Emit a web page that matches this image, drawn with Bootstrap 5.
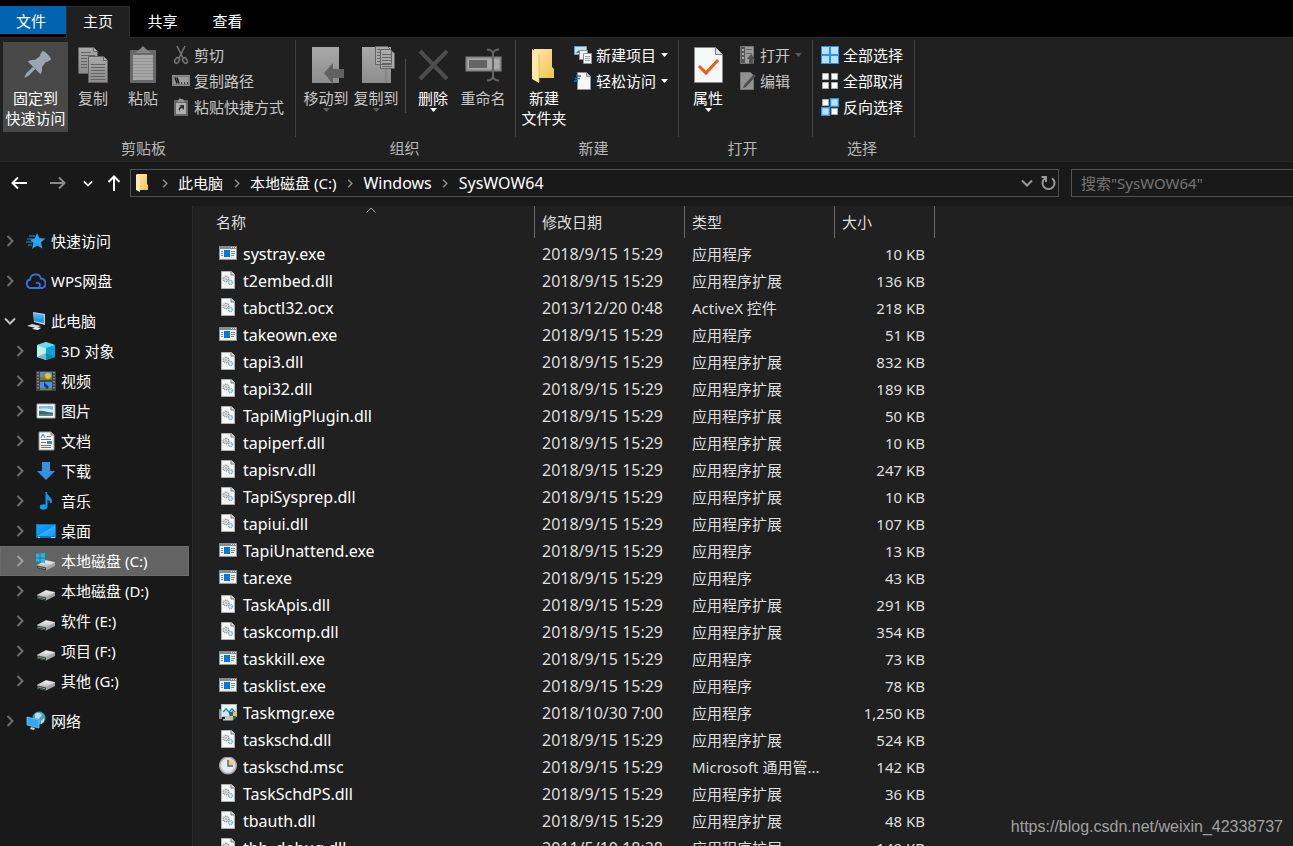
<!DOCTYPE html>
<html lang="zh-CN" data-bs-theme="dark">
<head>
<meta charset="utf-8">
<meta name="viewport" content="width=device-width, initial-scale=1">
<title>SysWOW64</title>
<link href="https://cdn.jsdelivr.net/npm/bootstrap@5.3.0/dist/css/bootstrap.min.css" rel="stylesheet">
<style>
body{font:15px/20px "Noto Sans","Noto Sans CJK SC",sans-serif;background:#191919;color:#fff}
button{font:inherit;color:inherit;background:none;border:0;padding:0}
svg{display:block;flex:none}
a{color:inherit;text-decoration:none}
/* tab strip */
.tab-strip{background:#000;height:38px;padding-top:6px;border-bottom:1px solid #2b2b2b}
.tab-strip button{width:65px;height:28px;padding-top:2px}
.tab-strip .tab-file{background:#0063b1;width:66px;padding-right:4px}
.tab-strip .tab-on{background:#202020;border:1px solid #2b2b2b;border-bottom:0;height:32px;width:64px;padding:0 0 3px}
/* ribbon */
.ribbon{background:#202020;border-bottom:1px solid #2b2b2b;height:124px;flex:none}
.rgroup{padding-top:4px;position:relative}
.rgroup::after{content:"";position:absolute;right:0;top:2px;height:97px;width:1px;background:#414141}
.g-clip{padding-left:3px;padding-right:12px}
.g-org{padding-left:5px;padding-right:8px}
.g-new{padding-left:3px;padding-right:11px}
.g-open{padding-left:4px;padding-right:11px}
.g-sel{padding-left:8px;padding-right:12px}
.rbody{height:96px}
.rtitle{color:#b8b8b8;line-height:20px;text-align:center}
.big{width:50px;height:90px;padding-top:4px;white-space:nowrap;display:flex;flex-direction:column;align-items:center;justify-content:flex-start}
.big svg.pic{width:40px;height:40px;margin-bottom:2px}
.pinned{width:65px;background:#484848}
.small-btn{height:26px;display:flex;align-items:center;gap:4px;white-space:nowrap}
.col-small{padding-left:5px}
.tri{width:7px;height:4px}
.small-btn .tri{margin-left:1px}
.off{color:#c8c8c8}
.off .tri{color:#5c5c5c}
.vline{width:1px;height:54px;background:#505050;margin:17px 2px 0 4px}
/* address row */
.addr-row{height:44px;padding:7px 0 9px;flex:none}
.nav-btns button{display:flex;justify-content:center;align-items:center;height:28px}
.w38{width:38px}.w40{width:40px}.w20{width:20px}.w32{width:32px}
.addr{border:1px solid #535353;height:28px;padding-left:4px;padding-right:2px;min-width:0}
.sep27{width:27px;display:flex;justify-content:center;color:#8c8c8c}
.crumb-lat{font-size:16px}
.glyph{color:#999}
.find{width:222px;height:28px;border:1px solid #535353;border-right:0;background:none;padding:0 9px;margin-left:12px;border-radius:0;outline:0;color:#fff}
.find::placeholder{color:#757575;opacity:1}
/* navigation pane */
.tree{width:192px;padding-top:20px;flex:none}
.tree a{display:flex;align-items:center;height:30px;white-space:nowrap}
.tree .chev{width:8px;height:12px;margin:0 10px 0 6px;color:#6e6e6e}
.tree .kid .chev{margin-left:16px;margin-right:11px}
.tree .open .chev{width:12px;margin:0 8px 0 4px;color:#c0c0c0}
.tree .ico{width:24px;height:24px;padding:2px;margin-right:3px}
.tree .kid .ico{width:22px;margin-right:4px;padding:2px 1px}
.tree .gap-top{margin-top:10px}
.tree .cur{background:#636363;box-shadow:inset 0 0 0 1px #6c6c6c;margin-right:3px}
.tree .cur .chev{color:#a0a0a0}
/* file list */
.files{background:#202020;border-left:1px solid #2b2b2b;min-width:0}
.ftable{width:742px;table-layout:fixed;color:#dedede}
.ftable th,.ftable td{padding:0;font-weight:400;white-space:nowrap}
.ftable th{height:34px;vertical-align:top}
.ftable th div{height:32px;line-height:32px;border-right:1px solid #6a6a6a;padding-left:7px}
.ftable th.c-name div{margin-left:15px;padding-left:8px;position:relative}
.c-name{width:342px}.c-mid{width:150px}.c-size{width:100px}
.ftable td{height:27px;padding-left:7px}
.ftable td:first-child{color:#fff;padding-left:26px;font-size:16px}
.ftable td:nth-child(2){font-size:16px}
.ftable td:last-child{text-align:right;padding-right:10px}
.fn{display:flex;align-items:center;gap:6px}
.fn svg{width:18px;height:20px}
.sort{position:absolute;top:1px;left:50%;transform:translateX(-50%)}
.stamp{position:absolute;right:10px;bottom:9px;font:16px/20px "Liberation Sans",Arial,sans-serif;color:#a2a2a2}
</style>
</head>
<body class="vh-100 overflow-hidden d-flex flex-column">
<svg width="0" height="0" class="position-absolute" aria-hidden="true">
<defs>
<linearGradient id="gy" x1="0" x2="1" y2="1"><stop stop-color="#ffe9a6"/><stop offset="1" stop-color="#eec353"/></linearGradient>
<linearGradient id="gg" x2="0" y2="1"><stop stop-color="#a9a9a9"/><stop offset="1" stop-color="#8c8c8c"/></linearGradient>
<linearGradient id="gb" x1="0" x2="1" y2="1"><stop stop-color="#19a2ff"/><stop offset=".5" stop-color="#0a93f7"/><stop offset=".52" stop-color="#35b0ff"/><stop offset="1" stop-color="#079cff"/></linearGradient>
<linearGradient id="gs" x2="0" y2="1"><stop stop-color="#56c3fa"/><stop offset="1" stop-color="#1385e0"/></linearGradient>
<linearGradient id="gd" x2="0" y2="1"><stop stop-color="#f4f4f4"/><stop offset="1" stop-color="#b9b9b9"/></linearGradient>
<symbol id="right" viewBox="0 0 8 12"><path d="M1.500 1 6.500 6l-5 5" fill="none" stroke="currentColor" stroke-width="2"/></symbol>
<symbol id="down" viewBox="0 0 12 8"><path d="M1 1.500 6 6.500 11 1.500" fill="none" stroke="currentColor" stroke-width="2"/></symbol>
<symbol id="tri" viewBox="0 0 7 4"><path d="M0 0h7L3.500 4z" fill="currentColor"/></symbol>
<symbol id="folder" viewBox="0 0 24 36"><path d="M3 1h18v18l2 2v9H3z" fill="url(#gy)"/><path d="M1 1l7 5v29l-7-4z" fill="#ffe9a8"/><path d="M8 6v28" stroke="#d8b45c" stroke-width=".8"/></symbol>
<symbol id="exe" viewBox="0 0 18 20"><rect x=".5" y="2.500" width="17" height="13" fill="#efefef" stroke="#8f979b"/><path d="M0 2h18v3H0z" fill="#838c91"/><path d="M12 3.500h1m1 0h1m1 0h1" stroke="#e8e8e8"/><path d="M5 6h6v7H5z" fill="#0078d7"/><path d="M2 7.500h2m-2 2h2m-2 2h2m8-4h4m-4 2h4m-4 2h3" stroke="#858c90"/></symbol>
<symbol id="dll" viewBox="0 0 18 20"><path d="M2.500.5h10l3 3v14h-13z" fill="#f7f7f7" stroke="#aeb2b4"/><path d="M12 .5V4h3.500" fill="#ddd" stroke="#73787b"/><circle cx="7" cy="8" r="2.700" fill="none" stroke="#8d9499" stroke-width="1.600" stroke-dasharray="1 .6"/><circle cx="7" cy="8" r="1.100" fill="none" stroke="#90979c" stroke-width=".7"/><circle cx="11.500" cy="11.500" r="2" fill="#d9edfa" stroke="#84a9c0" stroke-width="1.400" stroke-dasharray="1 .5"/></symbol>
<symbol id="mgr" viewBox="0 0 18 20"><path d="M0 6h3v10H0z" fill="#8c969b"/><path d="M0 6h3v2H0z" fill="#21bd25"/><path d="M6 13h5v3H6zM4 16h9v1.500H4z" fill="#c7ced2"/><rect x="2.500" y="1.500" width="15" height="12" fill="#eff6fa" stroke="#b4bec4"/><path d="m4 9 3-3 3 3 3-3 4 4v3H4z" fill="#cfeaf7"/><path d="m4 9 3-3 3 3 3-3 4 4" fill="none" stroke="#1a83ba" stroke-width="1.300"/><path d="M14 8c1 1 2.500 1 4 1 0 4-1 7-4 8.500C11 16 10 13 10 9c1.500 0 3 0 4-1z" fill="#1b65ae"/><path d="M14 8c1 1 2.500 1 4 1v4h-4zM14 13v4.500c-2.500-1-3.400-2.500-3.800-4.500z" fill="#f8c330"/></symbol>
<symbol id="clock" viewBox="0 0 18 20"><circle cx="9" cy="8.500" r="8.300" fill="#e8edf2" stroke="#a3a3a3" stroke-width="1.500"/><path d="M9 2.500A6 6 0 0 1 15 8.500H9z" fill="#edcf82"/><circle cx="9" cy="8.500" r="6.600" fill="none" stroke="#d0d5dc"/><path d="M9 3v6h5" fill="none" stroke="#52657c" stroke-width="1.500"/></symbol>
<symbol id="disk" viewBox="0 0 20 20"><path d="M1 14 10 9l9 2v4l-9 4.500-9-2z" fill="#a4a4a4"/><path d="M1 14 10 9.500l9 2-9 4.500z" fill="url(#gd)"/><path d="m1 14.500 9 2v3l-9-2z" fill="#3e423f"/><path d="m2 16 5 1.200" stroke="#848784"/><path d="M7 17.500h2" stroke="#39bd50"/></symbol>
</defs>
</svg>

<nav class="tab-strip d-flex flex-shrink-0" aria-label="功能区">
<button class="tab-file">文件</button><button class="tab-on">主页</button><button>共享</button><button>查看</button>
</nav>

<div class="ribbon d-flex">
<section class="rgroup g-clip">
<div class="rbody d-flex">
<button class="big pinned"><svg class="pic" viewBox="0 0 40 40"><g transform="translate(21 19) rotate(45)" fill="#9aa6b2"><path d="M-6-14Q0-16 6-14L5-9H4L5-2Q8 0 9 4H-9Q-8 0-5-2L-4-9H-5z"/><path d="M-1.600 4h3.200v10L0 18l-1.600-4z"/></g></svg><span>固定到</span><span>快速访问</span></button>
<button class="big off"><svg class="pic" viewBox="0 0 40 40"><g stroke="#626262" fill="url(#gg)"><path d="M5.500 1.500h15l4 4v22h-19z"/><path d="M15.500 10.500h15l4 4v22h-19z"/><path d="M30.500 10.500v4h4M20.500 1.500v4h4" fill="#bbb"/><path d="M18 18.500h14m-14 3h14m-14 3h14m-14 3h14m-14 3h14m-14 3h14M8 6.500h10m-10 3h14m-14 3h6m-6 3h6m-6 3h6m-6 3h6"/></g></svg><span>复制</span></button>
<button class="big off"><svg class="pic" viewBox="0 0 40 40"><rect x="7" y="4" width="26" height="33" rx="1" fill="#696969"/><path d="M10 9h20v25H10z" fill="#a6a6a6"/><path d="M12 7h16l-5-4-3-3-3 3z" fill="#858585"/><path d="M10 12.500h20m-20 3h20m-20 3h20m-20 3h20m-20 3h20m-20 3h20m-20 3h20" stroke="#929292"/></svg><span>粘贴</span></button>
<div class="off ps-1">
<button class="small-btn"><svg width="18" height="20" viewBox="0 0 18 20"><g fill="none" stroke="#777" stroke-width="1.600"><path d="M5 1l6 12M13 1 7 13"/><ellipse cx="5" cy="15.500" rx="2" ry="3" transform="rotate(35 5 15.500)"/><ellipse cx="13" cy="15.500" rx="2" ry="3" transform="rotate(-35 13 15.500)"/></g></svg>剪切</button>
<button class="small-btn"><svg width="18" height="12" viewBox="0 0 18 12"><path d="M0 0h18v11H0z" fill="#929292"/><path d="M1 1.500h16v8H1z" fill="#9d9d9d" stroke="#777"/><path d="m3 2.500 2 6m0-6 2 6M9 8h1m2 0h1m2 0h1" stroke="#151515" stroke-width="1.500"/></svg>复制路径</button>
<button class="small-btn"><svg width="18" height="20" viewBox="0 0 18 20"><path d="M2 3h14v16H2z" fill="#676767"/><path d="M4 6h10v11H4z" fill="#b0b0b0"/><path d="M5 5h8l-2-3H9L8 1 7 2z" fill="#929292"/><path d="M7 8h5v5l-2-2q-3 1-2 4-3-4 1-6z" fill="#333"/></svg>粘贴快捷方式</button>
</div></div><div class="rtitle">剪贴板</div>
</section>
<section class="rgroup g-org">
<div class="rbody d-flex">
<button class="big off"><svg class="pic" viewBox="0 0 40 40"><path d="M6 1h27v36H6z" fill="url(#gg)"/><path d="M29 24v13m3-13v13" stroke="#888"/><path d="m18 27 9-10v6h11v9H27v6z" fill="#616161"/></svg><span>移动到</span><svg class="tri"><use href="#tri"/></svg></button>
<button class="big off"><svg class="pic" viewBox="0 0 40 40"><path d="M6 1h29v36H6z" fill="url(#gg)"/><path d="M30 23v14" stroke="#777"/><g fill="#aaa" stroke="#646464"><path d="M19.500.5h12l4 4v14h-16zM24.500 3.500h10l4 4v15h-14z"/><path d="M26 8.500h10m-10 3h10m-10 3h10m-10 3h10m-10 3h10M21 3.500h8m-8 3h3m-3 3h3m-3 3h3m-3 3h3"/></g></svg><span>复制到</span><svg class="tri"><use href="#tri"/></svg></button>
<div class="vline"></div>
<button class="big"><svg class="pic" viewBox="0 0 40 40"><path d="M7 5l27 28M34 5 7 33" stroke="#4d4d4d" stroke-width="4"/></svg><span>删除</span><svg class="tri"><use href="#tri"/></svg></button>
<button class="big off"><svg class="pic" viewBox="0 0 40 40"><path d="M3.500 11.500h34v13h-34z" fill="#aaa" stroke="#858585" stroke-width="2"/><path d="M6 14h18v8H6z" fill="#646464"/><path d="M24 3.500q5 0 6 4 1-4 6-4M24 34.500q5 0 6-4 1 4 6 4M30 7v24" fill="none" stroke="#646464" stroke-width="2"/></svg><span>重命名</span></button>
</div><div class="rtitle">组织</div>
</section>
<section class="rgroup g-new">
<div class="rbody d-flex">
<button class="big"><svg class="pic" viewBox="0 0 40 40"><use href="#folder" x="7" y="2" width="24" height="36"/></svg><span>新建</span><span>文件夹</span></button>
<div class="col-small">
<button class="small-btn"><svg width="18" height="20" viewBox="0 0 18 20"><path d="M.5 1.500h12v8H.5z" fill="#bfe4f4" stroke="#6b9fae"/><path d="m2 8 3-3 3 3z" fill="#327d85"/><path d="M5.500 5.500h8v9h-8z" fill="#f4f4f4" stroke="#929292"/><path d="M9.500 8.500h8v10h-8z" fill="#fff" stroke="#929292"/><path d="M11 11.500h5m-5 2h5m-5 2h5" stroke="#7ca7d6"/></svg>新建项目<svg class="tri"><use href="#tri"/></svg></button>
<button class="small-btn"><svg width="18" height="20" viewBox="0 0 18 20"><path d="M3.500 1.500h9l4 4v13h-13z" fill="#f7f7f7" stroke="#8e9296"/><path d="M12.500 1.500v4h4" fill="#ccc" stroke="#8e9296"/><path d="M2 5h5M1 7.500h5M0 10h4" stroke="#1677c5" stroke-width="1.500"/></svg>轻松访问<svg class="tri"><use href="#tri"/></svg></button>
</div></div><div class="rtitle">新建</div>
</section>
<section class="rgroup g-open">
<div class="rbody d-flex">
<button class="big"><svg class="pic" viewBox="0 0 40 40"><path d="M6.500 1.500h21l7 7v28h-28z" fill="#f7f8f8" stroke="#898989"/><path d="M27.500 1.500v7h7" fill="#e2e5e8" stroke="#77797b"/><path d="m11 20 7 7 12-13" fill="none" stroke="#f25a16" stroke-width="3"/></svg><span>属性</span><svg class="tri"><use href="#tri"/></svg></button>
<div class="off col-small">
<button class="small-btn"><svg width="18" height="20" viewBox="0 0 18 20"><path d="M2.500 1.500h13v17h-13z" fill="#9b9b9b" stroke="#777"/><path d="M3 2h4v16H3z" fill="#555"/><path d="M4 4h2v2H4zm0 4h2v2H4zm0 4h2v2H4z" fill="#aaa"/><path d="M8 4.500h6m-6 4h6" stroke="#666"/><path d="m13 9 4 5h-2v5h-4v-5H9z" fill="#505050"/></svg>打开<svg class="tri"><use href="#tri"/></svg></button>
<button class="small-btn"><svg width="18" height="20" viewBox="0 0 18 20"><path d="M2.500 1.500h10l3 3v14h-13z" fill="#929292" stroke="#777"/><path d="m5 17 1-3L16 3l2 2L8 16z" fill="#4c4c4c"/></svg>编辑</button>
</div></div><div class="rtitle">打开</div>
</section>
<section class="rgroup g-sel">
<div class="rbody">
<button class="small-btn"><svg width="18" height="18" viewBox="0 0 18 18"><path d="M0 0h18v18H0z" fill="#2e91e6"/><path d="M1 1h7v7H1zM10 1h7v7h-7zM1 10h7v7H1zM10 10h7v7h-7z" fill="#b7e2ff"/></svg>全部选择</button>
<button class="small-btn"><svg width="18" height="18" viewBox="0 0 18 18"><path d="M1.500 1.500h6v6h-6zM10.500 1.500h6v6h-6zM1.500 10.500h6v6h-6zM10.500 10.500h6v6h-6z" fill="#fff" stroke="#aaa"/></svg>全部取消</button>
<button class="small-btn"><svg width="18" height="18" viewBox="0 0 18 18"><path d="M1.500 1.500h6v6h-6zM10.500 10.500h6v6h-6z" fill="#fff" stroke="#aaa"/><path d="M9.500.5h8v8h-8zM.5 9.500h8v8h-8z" fill="#b7e2ff" stroke="#2e91e6" stroke-width="1.500"/></svg>反向选择</button>
</div><div class="rtitle">选择</div>
</section>
</div>

<div class="addr-row d-flex align-items-center">
<div class="nav-btns d-flex">
<button class="w38" aria-label="后退"><svg width="16" height="14" viewBox="0 0 16 14"><path d="M16 7H2M7 1.500 1.500 7 7 12.500" fill="none" stroke="#fff" stroke-width="2"/></svg></button>
<button class="w40" aria-label="前进"><svg width="16" height="14" viewBox="0 0 16 14"><path d="M0 7h14M9 1.500 14.500 7 9 12.500" fill="none" stroke="#8a8a8a" stroke-width="2"/></svg></button>
<button class="w20" aria-label="最近位置"><svg width="10" height="7" viewBox="0 0 12 8"><use href="#down"/></svg></button>
<button class="w32" aria-label="上移"><svg width="14" height="16" viewBox="0 0 14 16"><path d="M7 16V2M1.500 7 7 1.500 12.500 7" fill="none" stroke="#fff" stroke-width="2"/></svg></button>
</div>
<div class="addr d-flex align-items-center flex-grow-1">
<svg width="16" height="18" viewBox="0 0 16 18"><path d="M2 0h10v10l1 1v5H2z" fill="url(#gy)"/><path d="m1 0 4 3v15l-4-2z" fill="#ffebb4"/></svg>
<span class="sep27"><svg width="6" height="9"><use href="#right"/></svg></span><a href="#">此电脑</a>
<span class="sep27"><svg width="6" height="9"><use href="#right"/></svg></span><a href="#">本地磁盘 (C:)</a>
<span class="sep27"><svg width="6" height="9"><use href="#right"/></svg></span><a href="#" class="crumb-lat">Windows</a>
<span class="sep27"><svg width="6" height="9"><use href="#right"/></svg></span><a href="#" class="crumb-lat">SysWOW64</a>
<button class="ms-auto me-2 glyph" aria-label="展开"><svg width="12" height="8"><use href="#down"/></svg></button>
<button class="glyph" aria-label="刷新"><svg width="15" height="16" viewBox="0 0 15 16" fill="none" stroke="currentColor" stroke-width="2"><path d="M11 3.200A6 6 0 1 1 4 3.200"/><path d="M.5 2H5v5"/></svg></button>
</div>
<input class="find" type="text" aria-label="搜索" placeholder='搜索"SysWOW64"'>
</div>

<main class="d-flex flex-grow-1 overflow-hidden">
<nav class="tree" aria-label="导航窗格">
<a href="#"><svg class="chev"><use href="#right"/></svg><svg class="ico" viewBox="0 0 20 20"><path d="m11 2 2.400 5.300 6 .3-4.500 4 1.600 6-5.300-3.200L6 18l1.400-6-4-4 5.300-.6z" fill="#27a5f5"/><path d="M3 5h6M1 8h5M0 11h6M2 14h4" stroke="#176cab" stroke-width="1.300"/></svg>快速访问</a>
<a href="#" class="gap-top"><svg class="chev"><use href="#right"/></svg><svg class="ico" viewBox="0 0 20 20"><path d="M14 17H5a4.300 4.300 0 0 1-.8-8.500A5.500 5.500 0 0 1 15 7.500a5 5 0 0 1 2 9.300c-3 .8-4-1-3-3a2.300 2.300 0 0 0-4-1.300" fill="none" stroke="#3a70e3" stroke-width="1.800"/></svg>WPS网盘</a>
<a href="#" class="gap-top open"><svg class="chev"><use href="#down"/></svg><svg class="ico" viewBox="0 0 20 20"><path d="m7 1 12 2v11L8 11z" fill="#c2d6df"/><path d="m8 2 10 2v8L8 10z" fill="url(#gs)"/><path d="m1 15 5-2 9 2-5 2z" fill="#d5d9dc"/><path d="m6 18 4-2 5 1-3 2z" fill="#f0f0f0"/></svg>此电脑</a>
<a href="#" class="kid"><svg class="chev"><use href="#right"/></svg><svg class="ico" viewBox="0 0 20 20"><path d="m1 4 9-3 9 3v12l-9 3-9-3z" fill="#11a7c9"/><path d="m1 4 9 3v12l-9-3z" fill="#b9f0f0"/><path d="m10 7 9-3v12l-9 3z" fill="#0aa5de"/><path d="m1 4 9-3 9 3-9 3z" fill="#6bdcec"/><path d="m1 16 9-4 9 4-9 3z" fill="#11657c" opacity=".4"/></svg>3D 对象</a>
<a href="#" class="kid"><svg class="chev"><use href="#right"/></svg><svg class="ico" viewBox="0 0 20 20"><path d="M0 0h20v20H0z" fill="#434343"/><path d="M4 1h12v8H4zM4 11h12v8H4z" fill="#4a8fe9"/><path d="M4 6h12v3H4zM4 17h12v2H4z" fill="#558b34"/><circle cx="12" cy="5" r="3" fill="#e4c62c"/><circle cx="7" cy="5" r="2" fill="#dd5b53"/><path d="m8 11 5 5-2 2-3-3z" fill="#202e85"/><path d="M2 1v18M18 1v18" stroke="#999" stroke-width="1.500" stroke-dasharray="1.500 1.500"/></svg>视频</a>
<a href="#" class="kid"><svg class="chev"><use href="#right"/></svg><svg class="ico" viewBox="0 0 20 20"><path d="M1 3h18v14H1z" fill="#fff" stroke="#a9a9a9"/><path d="M3 5h14v10H3z" fill="#79bdec"/><path d="M3 8q7-2 14 1v2H3z" fill="#d7edf5"/><path d="M3 10c5-1 8 2 14 2v3H3z" fill="#356e62"/><path d="M3 13h14v2H3z" fill="#4d8ba0"/></svg>图片</a>
<a href="#" class="kid"><svg class="chev"><use href="#right"/></svg><svg class="ico" viewBox="0 0 20 20"><path d="M3 1h12l3 3v15H3z" fill="#f7f7f7" stroke="#999"/><path d="M15 1v3h3" fill="#bbb" stroke="#888"/><path d="M5 8.500h10m-10 3h5m-5 3h10m-10 2h10M11 5.500h4" stroke="#777"/><path d="m5 7 2-4 2 4" fill="none" stroke="#2589d0"/><path d="M11 10h5v3h-5z" fill="#4788b4"/></svg>文档</a>
<a href="#" class="kid"><svg class="chev"><use href="#right"/></svg><svg class="ico" viewBox="0 0 20 20"><path d="M6 1h8v9h5l-9 9-9-9h5z" fill="#3590e1"/></svg>下载</a>
<a href="#" class="kid"><svg class="chev"><use href="#right"/></svg><svg class="ico" viewBox="0 0 20 20"><ellipse cx="7.500" cy="16" rx="3.700" ry="2.800" fill="#0b9bf8"/><path d="M10 16V1c1 5 7 5 5 11-1-3-2-3-4-4v8z" fill="#0b9bf8" stroke="#0b9bf8"/></svg>音乐</a>
<a href="#" class="kid"><svg class="chev"><use href="#right"/></svg><svg class="ico" viewBox="0 0 20 20"><path d="M0 3h20v14H0z" fill="#0878bd"/><path d="M1 4h18v11H1z" fill="url(#gb)"/><path d="M2 16.500h2m11 0h4" stroke="#a1dcff"/></svg>桌面</a>
<a href="#" class="kid cur"><svg class="chev"><use href="#right"/></svg><svg class="ico" viewBox="0 0 20 20"><use href="#disk" width="20" height="20"/><path d="m0 3 3.500-.5v4H0zm4.500-.6L9 2v4.500H4.500zM0 7.500h3.500v3.500L0 10.500zm4.500 0H9V12l-4.500-.7z" fill="#10bcf4"/></svg>本地磁盘 (C:)</a>
<a href="#" class="kid"><svg class="chev"><use href="#right"/></svg><svg class="ico" viewBox="0 0 20 20"><use href="#disk"/></svg>本地磁盘 (D:)</a>
<a href="#" class="kid"><svg class="chev"><use href="#right"/></svg><svg class="ico" viewBox="0 0 20 20"><use href="#disk"/></svg>软件 (E:)</a>
<a href="#" class="kid"><svg class="chev"><use href="#right"/></svg><svg class="ico" viewBox="0 0 20 20"><use href="#disk"/></svg>项目 (F:)</a>
<a href="#" class="kid"><svg class="chev"><use href="#right"/></svg><svg class="ico" viewBox="0 0 20 20"><use href="#disk"/></svg>其他 (G:)</a>
<a href="#" class="gap-top"><svg class="chev"><use href="#right"/></svg><svg class="ico" viewBox="0 0 20 20"><circle cx="13" cy="7" r="6.500" fill="#4b9dbd"/><path d="M9 3q4-3 7 1l-3 4-4-1zM15 10l3-3q1 4-3 6z" fill="#a8e2f0"/><path d="m1 6 12 3v8L1 14z" fill="#31a8f4" stroke="#75c9f5" stroke-width=".8"/><path d="m5 16 4 1-1 2-4-1z" fill="#cbd1d4"/></svg>网络</a>
</nav>

<div class="files flex-grow-1 overflow-hidden">
<table class="ftable">
<thead><tr>
<th class="c-name"><div>名称<svg class="sort" width="10" height="6" viewBox="0 0 10 6"><path d="m.5 5.500 4.500-4.500 4.500 4.500" fill="none" stroke="#aaa"/></svg></div></th>
<th class="c-mid"><div>修改日期</div></th><th class="c-mid"><div>类型</div></th><th class="c-size"><div>大小</div></th>
</tr></thead>
<tbody>
<tr><td><span class="fn"><svg><use href="#exe"/></svg>systray.exe</span></td><td>2018/9/15 15:29</td><td>应用程序</td><td>10 KB</td></tr>
<tr><td><span class="fn"><svg><use href="#dll"/></svg>t2embed.dll</span></td><td>2018/9/15 15:29</td><td>应用程序扩展</td><td>136 KB</td></tr>
<tr><td><span class="fn"><svg><use href="#dll"/></svg>tabctl32.ocx</span></td><td>2013/12/20 0:48</td><td>ActiveX 控件</td><td>218 KB</td></tr>
<tr><td><span class="fn"><svg><use href="#exe"/></svg>takeown.exe</span></td><td>2018/9/15 15:29</td><td>应用程序</td><td>51 KB</td></tr>
<tr><td><span class="fn"><svg><use href="#dll"/></svg>tapi3.dll</span></td><td>2018/9/15 15:29</td><td>应用程序扩展</td><td>832 KB</td></tr>
<tr><td><span class="fn"><svg><use href="#dll"/></svg>tapi32.dll</span></td><td>2018/9/15 15:29</td><td>应用程序扩展</td><td>189 KB</td></tr>
<tr><td><span class="fn"><svg><use href="#dll"/></svg>TapiMigPlugin.dll</span></td><td>2018/9/15 15:29</td><td>应用程序扩展</td><td>50 KB</td></tr>
<tr><td><span class="fn"><svg><use href="#dll"/></svg>tapiperf.dll</span></td><td>2018/9/15 15:29</td><td>应用程序扩展</td><td>10 KB</td></tr>
<tr><td><span class="fn"><svg><use href="#dll"/></svg>tapisrv.dll</span></td><td>2018/9/15 15:29</td><td>应用程序扩展</td><td>247 KB</td></tr>
<tr><td><span class="fn"><svg><use href="#dll"/></svg>TapiSysprep.dll</span></td><td>2018/9/15 15:29</td><td>应用程序扩展</td><td>10 KB</td></tr>
<tr><td><span class="fn"><svg><use href="#dll"/></svg>tapiui.dll</span></td><td>2018/9/15 15:29</td><td>应用程序扩展</td><td>107 KB</td></tr>
<tr><td><span class="fn"><svg><use href="#exe"/></svg>TapiUnattend.exe</span></td><td>2018/9/15 15:29</td><td>应用程序</td><td>13 KB</td></tr>
<tr><td><span class="fn"><svg><use href="#exe"/></svg>tar.exe</span></td><td>2018/9/15 15:29</td><td>应用程序</td><td>43 KB</td></tr>
<tr><td><span class="fn"><svg><use href="#dll"/></svg>TaskApis.dll</span></td><td>2018/9/15 15:29</td><td>应用程序扩展</td><td>291 KB</td></tr>
<tr><td><span class="fn"><svg><use href="#dll"/></svg>taskcomp.dll</span></td><td>2018/9/15 15:29</td><td>应用程序扩展</td><td>354 KB</td></tr>
<tr><td><span class="fn"><svg><use href="#exe"/></svg>taskkill.exe</span></td><td>2018/9/15 15:29</td><td>应用程序</td><td>73 KB</td></tr>
<tr><td><span class="fn"><svg><use href="#exe"/></svg>tasklist.exe</span></td><td>2018/9/15 15:29</td><td>应用程序</td><td>78 KB</td></tr>
<tr><td><span class="fn"><svg><use href="#mgr"/></svg>Taskmgr.exe</span></td><td>2018/10/30 7:00</td><td>应用程序</td><td>1,250 KB</td></tr>
<tr><td><span class="fn"><svg><use href="#dll"/></svg>taskschd.dll</span></td><td>2018/9/15 15:29</td><td>应用程序扩展</td><td>524 KB</td></tr>
<tr><td><span class="fn"><svg><use href="#clock"/></svg>taskschd.msc</span></td><td>2018/9/15 15:29</td><td>Microsoft 通用管...</td><td>142 KB</td></tr>
<tr><td><span class="fn"><svg><use href="#dll"/></svg>TaskSchdPS.dll</span></td><td>2018/9/15 15:29</td><td>应用程序扩展</td><td>36 KB</td></tr>
<tr><td><span class="fn"><svg><use href="#dll"/></svg>tbauth.dll</span></td><td>2018/9/15 15:29</td><td>应用程序扩展</td><td>48 KB</td></tr>
<tr><td><span class="fn"><svg><use href="#dll"/></svg>tbb_debug.dll</span></td><td>2011/5/10 18:28</td><td>应用程序扩展</td><td>149 KB</td></tr>
</tbody>
</table>
</div>
</main>
<div class="stamp">https://blog.csdn.net/weixin_42338737</div>
<script src="https://cdn.jsdelivr.net/npm/bootstrap@5.3.0/dist/js/bootstrap.bundle.min.js"></script>
</body>
</html>
